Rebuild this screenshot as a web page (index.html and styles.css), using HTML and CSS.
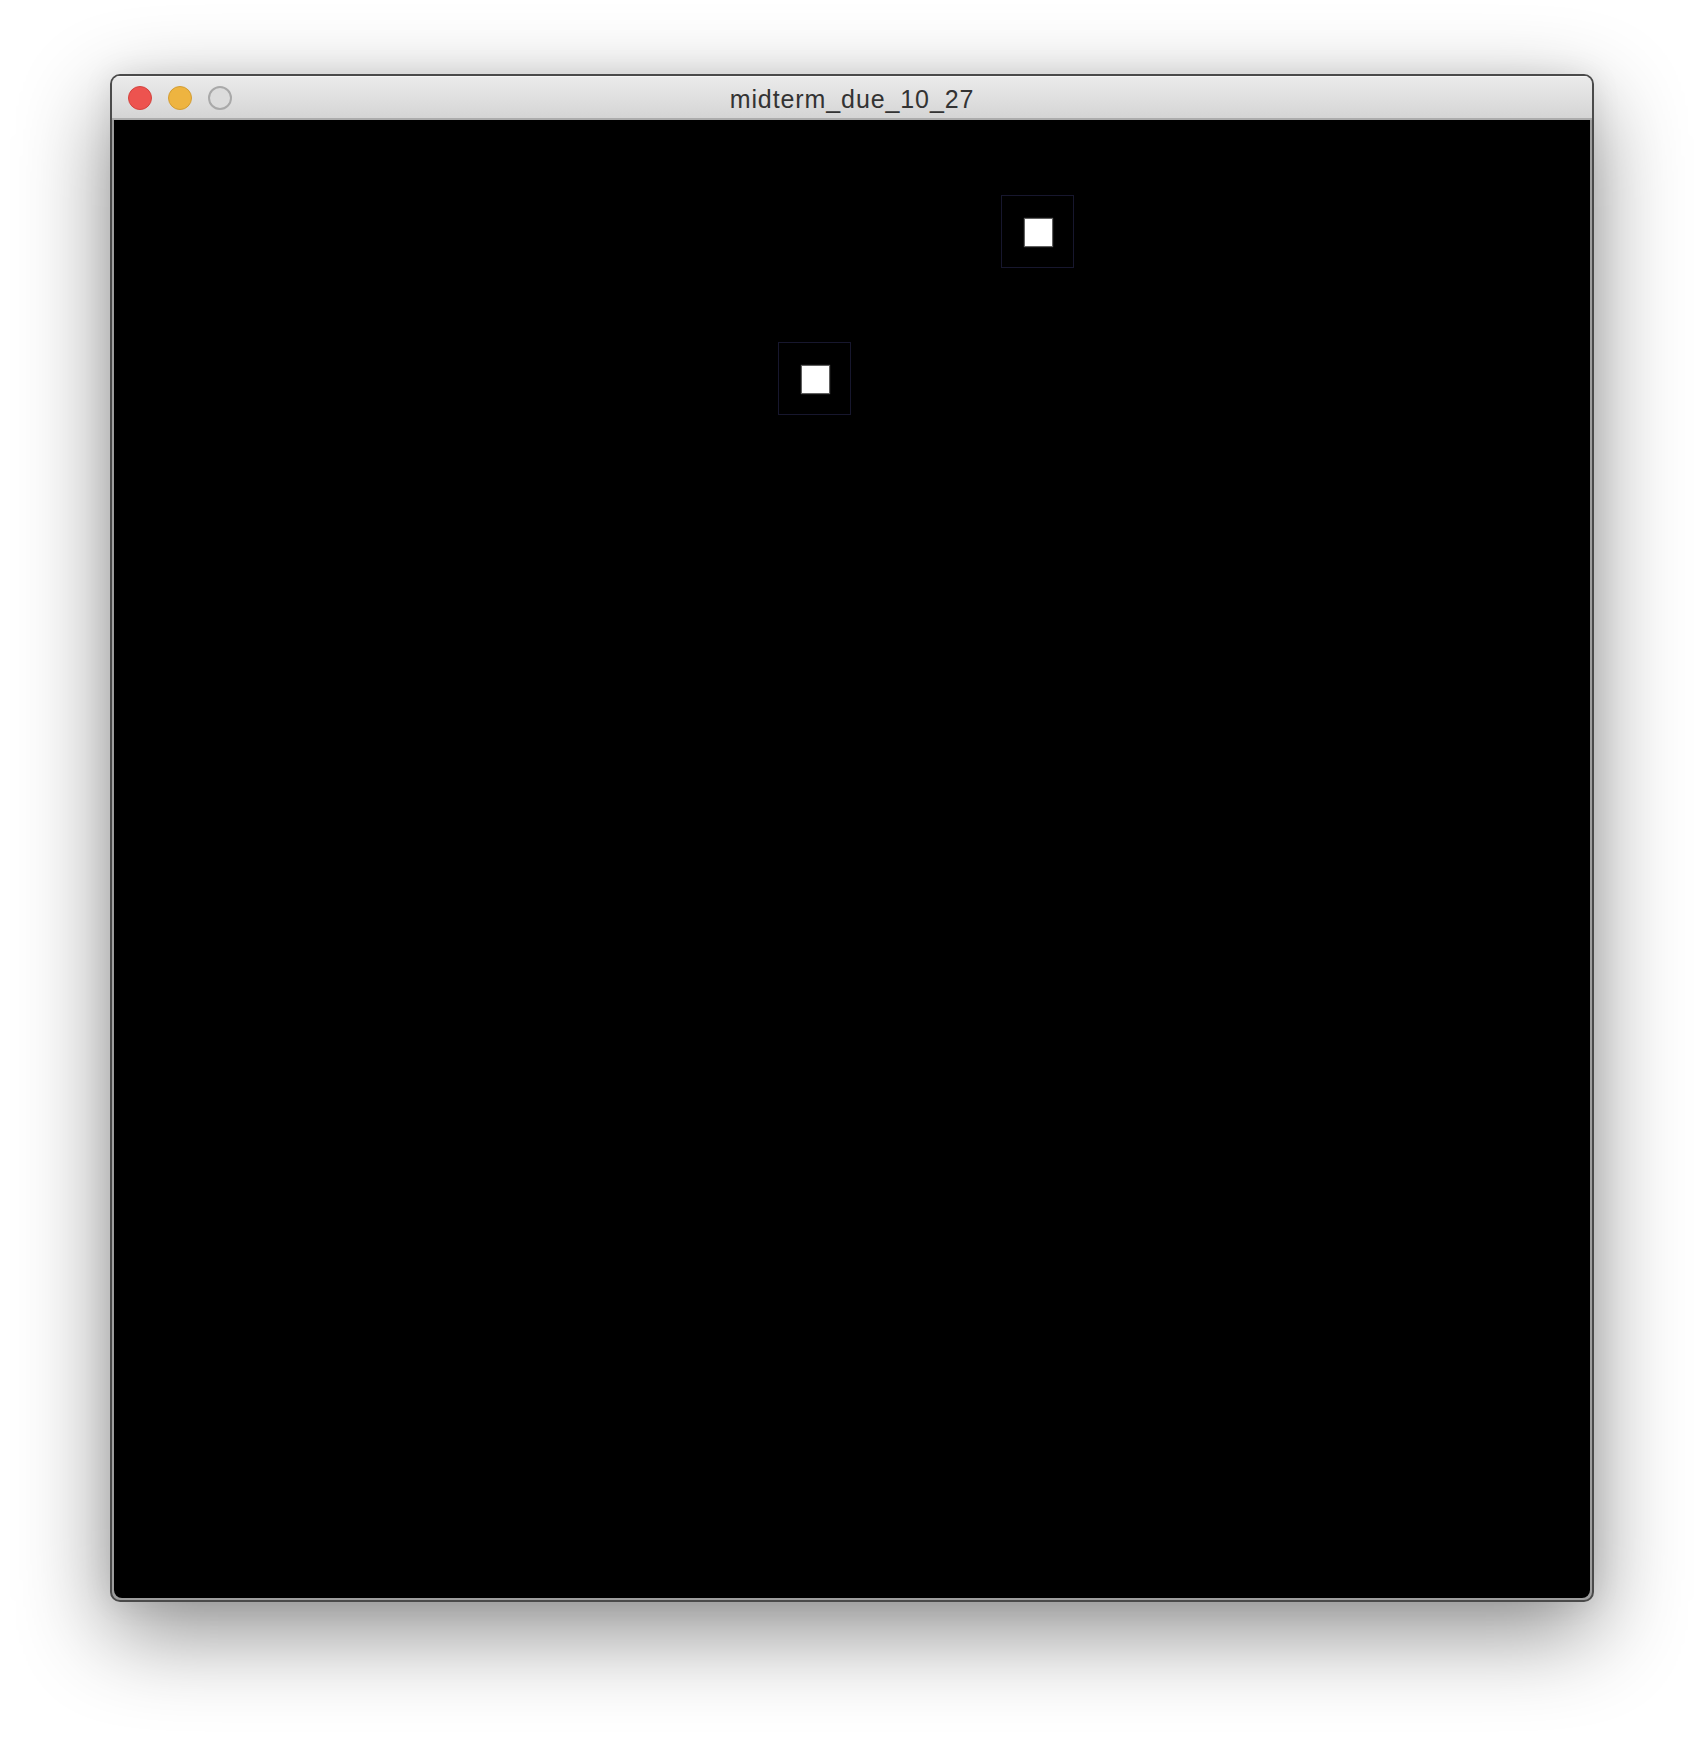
FILE: index.html
```html
<!DOCTYPE html>
<html>
<head>
<meta charset="utf-8">
<title>midterm_due_10_27</title>
<link rel="stylesheet" href="styles.css">
</head>
<body>
<div class="window">
  <div class="titlebar">
    <div class="lights">
      <span class="light close"></span>
      <span class="light min"></span>
      <span class="light zoom"></span>
    </div>
    <div class="title">midterm_due_10_27</div>
  </div>
  <div class="canvas">
    <div class="cell cell-a"><div class="dot"></div></div>
    <div class="cell cell-b"><div class="dot"></div></div>
  </div>
</div>
</body>
</html>
```

FILE: styles.css
```css
html, body {
  margin: 0;
  padding: 0;
  background: #ffffff;
}
body {
  width: 1704px;
  height: 1748px;
  overflow: hidden;
  font-family: "Liberation Sans", Arial, sans-serif;
}
.window {
  margin: 74px 0 0 110px;
  width: 1480px;
  border: 2px solid #4a4a4a;
  border-radius: 10px;
  background: #9e9e9e;
  overflow: hidden;
  box-shadow: 0 0 30px rgba(0,0,0,0.08), 0 30px 90px rgba(0,0,0,0.45);
}
.titlebar {
  position: relative;
  height: 42px;
  border-bottom: 2px solid #acacac;
  background: linear-gradient(#ebebeb, #d5d5d5);
  box-shadow: inset 0 1px 0 #f6f6f6;
  display: flex;
  align-items: center;
}
.lights {
  display: flex;
  gap: 16px;
  padding: 1px 0 0 16px;
}
.light {
  width: 24px;
  height: 24px;
  border-radius: 50%;
  box-sizing: border-box;
}
.close {
  background: #ed534f;
  border: 1px solid #d4433e;
}
.min {
  background: #eeb440;
  border: 1px solid #d39d33;
}
.zoom {
  background: #dcdcdc;
  border: 2px solid #a9a9a9;
}
.title {
  position: absolute;
  left: 0;
  right: 0;
  top: 0;
  line-height: 42px;
  padding-top: 2px;
  text-align: center;
  font-size: 25px;
  letter-spacing: 0.9px;
  color: #333333;
}
.canvas {
  position: relative;
  margin: 0 2px 2px 2px;
  height: 1478px;
  background: #000000;
  border-radius: 0 0 8px 8px;
}
.cell {
  position: absolute;
  width: 73px;
  height: 73px;
  box-sizing: border-box;
  border: 1px solid #17172e;
}
.cell-a { left: 887px; top: 75px; }
.cell-b { left: 664px; top: 222px; }
.dot {
  position: absolute;
  left: 23px;
  top: 23px;
  width: 27px;
  height: 27px;
  background: #ffffff;
  box-shadow: 0 0 1px 1px rgba(160,160,160,0.6);
}
```
